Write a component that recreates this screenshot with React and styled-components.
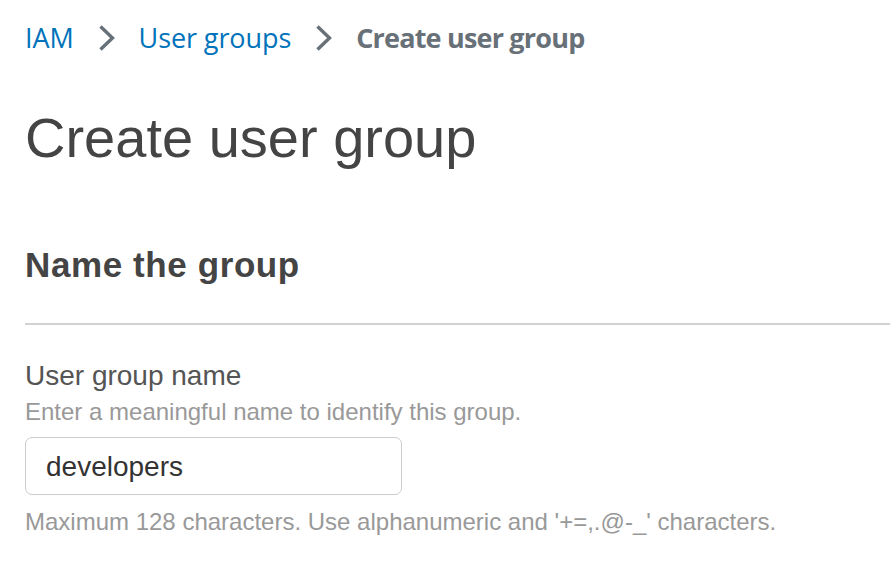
import React from "react";
import styled, { createGlobalStyle } from "styled-components";

const GlobalStyle = createGlobalStyle`
  html, body {
    margin: 0;
    padding: 0;
    background: #ffffff;
  }
  body {
    font-family: "Liberation Sans", Arial, sans-serif;
  }
`;

const Page = styled.div`
  width: 890px;
  height: 570px;
  overflow: hidden;
  padding: 0 0 0 25px;
  box-sizing: border-box;
`;

const Breadcrumbs = styled.nav`
  display: flex;
  align-items: center;
  gap: 24px;
  height: 36px;
  margin-top: 20px;
  font-family: "Open Sans", sans-serif;
  font-size: 27px;
  line-height: 36px;
`;

const Crumb = styled.a`
  color: ${({ current }) => (current ? "#687078" : "#0073bb")};
  font-weight: ${({ current }) => (current ? 700 : 400)};
  letter-spacing: ${({ current }) => (current ? "-0.8px" : "-0.1px")};
  text-decoration: none;
  white-space: nowrap;
`;

const Chevron = () => (
  <svg width="17" height="28" viewBox="0 0 17 28" fill="none">
    <path d="M2.5 2.5 L14.5 14 L2.5 25.5" stroke="#687078" strokeWidth="3.4" />
  </svg>
);

const Title = styled.h1`
  margin: 50px 0 0;
  font-size: 56px;
  font-weight: 400;
  line-height: 64px;
  color: #444444;
`;

const SectionHeader = styled.h2`
  margin: 75px 0 0;
  font-size: 35px;
  font-weight: 700;
  line-height: 40px;
  letter-spacing: 0.6px;
  color: #444444;
`;

const Divider = styled.hr`
  margin: 38px 0 0;
  border: 0;
  border-top: 2px solid #d2d2d2;
`;

const Field = styled.div`
  display: flex;
  flex-direction: column;
  align-items: flex-start;
  margin-top: 37px;
`;

const Label = styled.label`
  font-size: 28px;
  line-height: 28px;
  color: #555555;
`;

const Description = styled.div`
  margin-top: 8px;
  font-size: 24px;
  line-height: 28px;
  color: #999999;
`;

const Input = styled.div`
  display: flex;
  align-items: center;
  width: 377px;
  height: 58px;
  margin-top: 11px;
  padding: 2px 20px 0;
  box-sizing: border-box;
  border: 1.5px solid #cccccc;
  border-radius: 7px;
  font-size: 28px;
  color: #333333;
`;

const Hint = styled.div`
  margin-top: 13px;
  font-size: 24px;
  line-height: 28px;
  color: #999999;
`;

export default function App() {
  return (
    <>
      <GlobalStyle />
      <Page>
        <Breadcrumbs>
          <Crumb href="#">IAM</Crumb>
          <Chevron />
          <Crumb href="#">User groups</Crumb>
          <Chevron />
          <Crumb current>Create user group</Crumb>
        </Breadcrumbs>
        <Title>Create user group</Title>
        <SectionHeader>Name the group</SectionHeader>
        <Divider />
        <Field>
          <Label>User group name</Label>
          <Description>Enter a meaningful name to identify this group.</Description>
          <Input>developers</Input>
          <Hint>Maximum 128 characters. Use alphanumeric and '+=,.@-_' characters.</Hint>
        </Field>
      </Page>
    </>
  );
}
